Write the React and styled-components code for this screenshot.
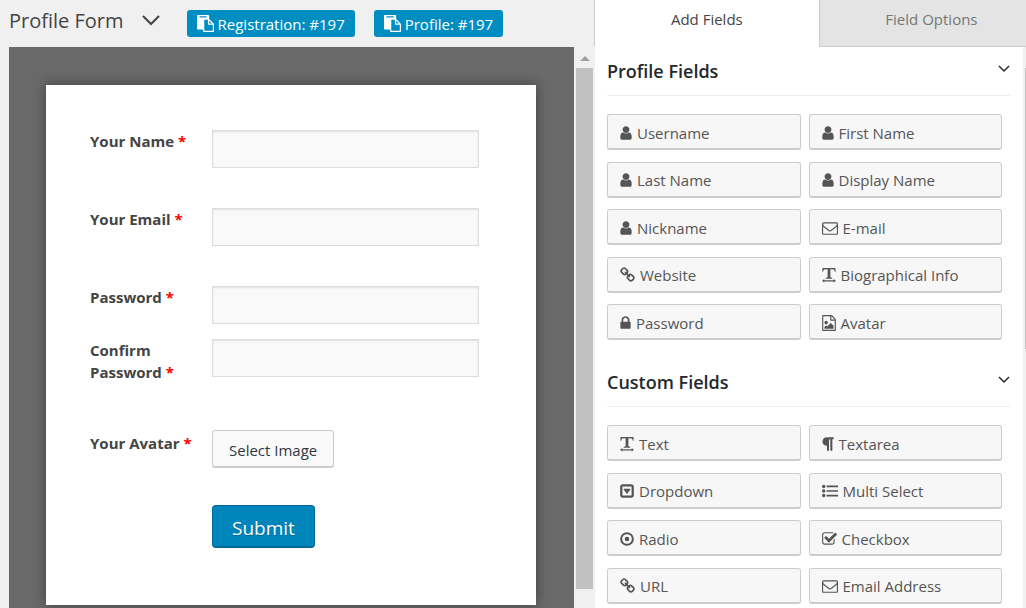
import { useState } from 'react';
import styled, { createGlobalStyle } from 'styled-components';

// Icon outlines share an 1792 unit em; "x" and "w" crop each one to its own advance width
const icons = {
  user: {
    x: 256, w: 1280, px: 12,
    d: 'M1536 1399q0 109-62.5 187t-150.5 78h-854q-88 0-150.5-78t-62.5-187q0-85 8.5-160.5t31.5-152 58.5-131 94-89 134.5-34.5q131 128 313 128t313-128q76 0 134.5 34.5t94 89 58.5 131 31.5 152 8.5 160.5zm-256-887q0 159-112.5 271.5t-271.5 112.5-271.5-112.5-112.5-271.5 112.5-271.5 271.5-112.5 271.5 112.5 112.5 271.5z',
  },
  envelope: {
    x: 0, w: 1792, px: 16,
    d: 'M1664 1504v-768q-32 36-69 66-268 206-426 338-51 43-83 67t-86.5 48.5-102.5 24.5h-2q-48 0-102.5-24.5t-86.5-48.5-83-67q-158-132-426-338-37-30-69-66v768q0 13 9.5 22.5t22.5 9.5h1472q13 0 22.5-9.5t9.5-22.5zm0-1051v-24.5l-.5-13-3-12.5-5.5-9-9-7.5-14-2.5h-1472q-13 0-22.5 9.5t-9.5 22.5q0 168 147 284 193 152 401 317 6 5 35 29.5t46 37.5 44.5 31.5 50.5 27.5 43 9h2q20 0 43-9t50.5-27.5 44.5-31.5 46-37.5 35-29.5q208-165 401-317 54-43 100.5-115.5t46.5-131.5zm128-37v1088q0 66-47 113t-113 47h-1472q-66 0-113-47t-47-113v-1088q0-66 47-113t113-47h1472q66 0 113 47t47 113z',
  },
  link: {
    x: 64, w: 1664, px: 15,
    d: 'M1520 1216q0-40-28-68l-208-208q-28-28-68-28-42 0-72 32 3 3 19 18.5t21.5 21.5 15 19 13 25.5 3.5 27.5q0 40-28 68t-68 28q-15 0-27.5-3.5t-25.5-13-19-15-21.5-21.5-18.5-19q-33 31-33 73 0 40 28 68l206 207q27 27 68 27 40 0 68-26l147-146q28-28 28-67zm-703-705q0-40-28-68l-206-207q-28-28-68-28-39 0-68 27l-147 146q-28 28-28 67 0 40 28 68l208 208q27 27 68 27 42 0 72-31-3-3-19-18.5t-21.5-21.5-15-19-13-25.5-3.5-27.5q0-40 28-68t68-28q15 0 27.5 3.5t25.5 13 19 15 21.5 21.5 18.5 19q33-31 33-73zm895 705q0 120-85 203l-147 146q-83 83-203 83-121 0-204-85l-206-207q-83-83-83-203 0-123 88-209l-88-88q-86 88-208 88-120 0-204-84l-208-208q-84-84-84-204t85-203l147-146q83-83 203-83 121 0 204 85l206 207q83 83 83 203 0 123-88 209l88 88q86-88 208-88 120 0 204 84l208 208q84 84 84 204z',
  },
  lock: {
    x: 320, w: 1152, px: 11,
    d: 'M640 768h512v-192q0-106-75-181t-181-75-181 75-75 181v192zm832 96v576q0 40-28 68t-68 28h-960q-40 0-68-28t-28-68v-576q0-40 28-68t68-28h32v-192q0-184 132-316t316-132 316 132 132 316v192h32q40 0 68 28t28 68z',
  },
  textWidth: {
    x: 128, w: 1536, px: 14,
    d: 'M170 110h1452l20 410h-100q-30-180-90-235-40-30-400-28v820q0 90 50 105l160 30v90h-732v-90l160-30q50-15 50-105v-820q-360-2-400 28-60 55-90 235h-100zM128 1550l240-210v140h1056v-140l240 210-240 210v-140h-1056v140z',
  },
  image: {
    x: 128, w: 1536, px: 14,
    d: 'M1596 380q28 28 48 76t20 88v1152q0 40-28 68t-68 28h-1344q-40 0-68-28t-28-68v-1600q0-40 28-68t68-28h896q40 0 88 20t76 48zm-444-244v376h376q-10-29-22-41l-313-313q-12-12-41-22zm384 1528v-1024h-416q-40 0-68-28t-28-68v-416h-768v1536h1280zm-128-448v320h-1024v-192l192-192 128 128 384-384zm-832-192q-80 0-136-56t-56-136 56-136 136-56 136 56 56 136-56 136-136 56z',
  },
  paragraph: {
    x: 256, w: 1280, px: 12,
    d: 'M1534 189v73q0 29-18.5 61t-42.5 32q-50 0-54 1-26 6-32 31-3 11-3 64v1152q0 25-18 43t-43 18h-108q-25 0-43-18t-18-43v-1218h-143v1218q0 25-17.5 43t-43.5 18h-108q-26 0-43.5-18t-17.5-43v-496q-147-12-245-59-126-58-192-179-64-117-64-259 0-166 88-286 88-118 209-159 111-37 417-37h479q25 0 43 18t18 43z',
  },
  dropdown: {
    x: 128, w: 1536, px: 14,
    d: 'M1273 675q18 35-5 66l-320 448q-18 27-52 27t-52-27l-320-448q-23-31-5-66 17-35 57-35h640q40 0 57 35zm135 701v-960q0-14-9-23t-23-9h-960q-14 0-23 9t-9 23v960q0 14 9 23t23 9h960q14 0 23-9t9-23zm256-960v960q0 119-84.5 203.5t-203.5 84.5h-960q-119 0-203.5-84.5t-84.5-203.5v-960q0-119 84.5-203.5t203.5-84.5h960q119 0 203.5 84.5t84.5 203.5z',
  },
  list: {
    x: 0, w: 1792, px: 16,
    d: 'M0 384a192 192 0 1 0 384 0a192 192 0 1 0-384 0zM0 896a192 192 0 1 0 384 0a192 192 0 1 0-384 0zM0 1408a192 192 0 1 0 384 0a192 192 0 1 0-384 0zM512 288h1280v192h-1280zM512 800h1280v192h-1280zM512 1312h1280v192h-1280z',
  },
  radio: {
    x: 128, w: 1536, px: 14,
    d: 'M640 896a256 256 0 1 0 512 0a256 256 0 1 0-512 0zM896 352a544 544 0 1 0 0 1088a544 544 0 1 0 0-1088zM896 128a768 768 0 1 1 0 1536a768 768 0 1 1 0-1536z',
  },
  checkbox: {
    x: 64, w: 1664, px: 15,
    d: 'M1472 930v318q0 119-84.5 203.5t-203.5 84.5h-832q-119 0-203.5-84.5t-84.5-203.5v-832q0-119 84.5-203.5t203.5-84.5h832q63 0 117 25 15 7 18 23 3 17-9 29l-49 49q-10 10-23 10-3 0-9-2-23-6-45-6h-832q-66 0-113 47t-47 113v832q0 66 47 113t113 47h832q66 0 113-47t47-113v-254q0-13 9-22l64-64q10-10 23-10 6 0 12 3 20 8 20 29zm231-489l-814 814q-24 24-57 24t-57-24l-430-430q-24-24-24-57t24-57l110-110q24-24 57-24t57 24l263 263 647-647q24-24 57-24t57 24l110 110q24 24 24 57t-24 57z',
  },
  paste: {
    x: 0, w: 1792, px: 17,
    // the sheet behind is solid, only its clip and the front page are cut out
    d: 'M1024 224v-64q0-13-9.5-22.5t-22.5-9.5h-704q-13 0-22.5 9.5t-9.5 22.5v64q0 13 9.5 22.5t22.5 9.5h704q13 0 22.5-9.5t9.5-22.5zM768 1664h896v-640h-416q-40 0-68-28t-28-68v-416h-384v1152zM1280 896h299l-299-299v299zM1792 1024v672q0 40-28 68t-68 28h-960q-40 0-68-28t-28-68v-160h-544q-40 0-68-28t-28-68v-1344q0-40 28-68t68-28h1088q40 0 68 28t28 68v328q21 13 36 28l408 408q28 28 48 76t20 88z',
  },
};

const profileFields = [
  ['user', 'Username'],
  ['user', 'First Name'],
  ['user', 'Last Name'],
  ['user', 'Display Name'],
  ['user', 'Nickname'],
  ['envelope', 'E-mail'],
  ['link', 'Website'],
  ['textWidth', 'Biographical Info'],
  ['lock', 'Password'],
  ['image', 'Avatar'],
];

const customFields = [
  ['textWidth', 'Text'],
  ['paragraph', 'Textarea'],
  ['dropdown', 'Dropdown'],
  ['list', 'Multi Select'],
  ['radio', 'Radio'],
  ['checkbox', 'Checkbox'],
  ['link', 'URL'],
  ['envelope', 'Email Address'],
];

function Icon({ name }) {
  const { x, w, px, d } = icons[name];
  const size = name === 'paste' ? 17 : 16;
  return (
    <svg width={px} height={size} viewBox={`${x} 0 ${w} 1792`} fill="currentColor" fillRule="evenodd" aria-hidden="true">
      <path d={d} />
    </svg>
  );
}

function Chevron({ width, height, stroke }) {
  return (
    <svg width={width} height={height} viewBox={`0 0 ${width} ${height}`} fill="none" stroke="currentColor" strokeWidth={stroke} aria-hidden="true">
      <path d={`M1 1L${width / 2} ${height - 2}L${width - 1} 1`} />
    </svg>
  );
}

function FieldSection({ title, fields, minHeight }) {
  const [open, setOpen] = useState(true);

  return (
    <Section>
      <SectionTitle>
        <SectionToggle type="button" aria-expanded={open} onClick={() => setOpen(!open)}>
          {title}
          <Chevron width={12} height={8} stroke={1.5} />
        </SectionToggle>
      </SectionTitle>
      {open && (
        <FieldGrid $minHeight={minHeight}>
          {fields.map(([icon, label]) => (
            <FieldButton key={label} type="button">
              <Icon name={icon} />
              {label}
            </FieldButton>
          ))}
        </FieldGrid>
      )}
    </Section>
  );
}

function FormField({ id, label, type, gap }) {
  return (
    <FormRow $gap={gap}>
      <Label htmlFor={id}>
        {label} <Required>*</Required>
      </Label>
      <Input id={id} type={type} />
    </FormRow>
  );
}

export default function App() {
  const [tab, setTab] = useState('add');

  return (
    <>
      <GlobalStyle />
      <Builder>
        <Main>
          <TopBar>
            <FormTitle>Profile Form</FormTitle>
            <TitleToggle type="button" aria-label="Switch form">
              <Chevron width={18} height={11} stroke={2} />
            </TitleToggle>
            <ShortcodeButton type="button">
              <Icon name="paste" />
              Registration: #197
            </ShortcodeButton>
            <ShortcodeButton type="button">
              <Icon name="paste" />
              Profile: #197
            </ShortcodeButton>
          </TopBar>
          <Workspace>
            <Canvas>
              <Paper onSubmit={(e) => e.preventDefault()}>
                <FormField id="name" label="Your Name" type="text" gap={40} />
                <FormField id="email" label="Your Email" type="email" gap={40} />
                <FormField id="password" label="Password" type="password" gap={15} />
                <FormField id="confirm" label="Confirm Password" type="password" gap={47} />
                <FormRow $gap={37}>
                  <Label htmlFor="avatar" $button>
                    Your Avatar <Required>*</Required>
                  </Label>
                  <SelectButton id="avatar" type="button">Select Image</SelectButton>
                </FormRow>
                <Actions>
                  <SubmitButton type="submit">Submit</SubmitButton>
                </Actions>
              </Paper>
            </Canvas>
            <ScrollTrack>
              <ScrollArrow viewBox="0 0 10 5" aria-hidden="true">
                <path d="M5 0L10 5H0z" />
              </ScrollArrow>
              <ScrollThumb />
            </ScrollTrack>
          </Workspace>
        </Main>
        <Side>
          <Tabs role="tablist">
            <Tab type="button" role="tab" aria-selected={tab === 'add'} $active={tab === 'add'} onClick={() => setTab('add')}>
              Add Fields
            </Tab>
            <Tab type="button" role="tab" aria-selected={tab === 'options'} $active={tab === 'options'} onClick={() => setTab('options')}>
              Field Options
            </Tab>
          </Tabs>
          <SideBody>
            <Panel>
              <FieldSection title="Profile Fields" fields={profileFields} minHeight={226} />
              <FieldSection title="Custom Fields" fields={customFields} minHeight={179} />
            </Panel>
            <SideTrack>
              <SideThumb />
            </SideTrack>
          </SideBody>
        </Side>
      </Builder>
    </>
  );
}

// Styled Components
const GlobalStyle = createGlobalStyle`
  * {
    box-sizing: border-box;
  }

  body {
    margin: 0;
    background: #f0f0f0;
    color: #444;
    font-family: 'Open Sans', 'Noto Sans', sans-serif;
    font-size: 15px;
  }

  button,
  input {
    font: inherit;
  }

  button {
    cursor: pointer;
  }
`;

const Builder = styled.div`
  display: grid;
  grid-template-columns: 11fr 8fr;
  height: 100vh;
  overflow: hidden;
`;

const Main = styled.main`
  display: flex;
  flex-direction: column;
  min-width: 0;
  min-height: 0;
`;

const TopBar = styled.header`
  display: flex;
  flex: none;
  align-items: center;
  height: 47px;
  padding-left: 9px;
`;

const FormTitle = styled.h1`
  margin: 0;
  padding-bottom: 6px;
  font-size: 20px;
  line-height: 28px;
  font-weight: 500;
  white-space: nowrap;
`;

const TitleToggle = styled.button`
  display: flex;
  margin: 0 27px 6px 18px;
  padding: 0;
  border: 0;
  background: none;
  color: #444;
`;

const ShortcodeButton = styled.button`
  display: flex;
  align-items: center;
  gap: 4px;
  height: 27px;
  margin-right: 19px;
  padding: 0 10px;
  border: 0;
  border-radius: 3px;
  background: #008ec2;
  color: #fff;
  white-space: nowrap;
`;

const Workspace = styled.div`
  display: flex;
  flex: 1;
  min-height: 0;
  padding-left: 9px;
`;

const Canvas = styled.div`
  flex: 1;
  min-width: 0;
  padding: 38px 38px 0 37px;
  background: #696969;
  overflow: hidden;
`;

const Paper = styled.form`
  padding: 45px 57px 57px 44px;
  background: #fff;
  box-shadow: 0 0 12px rgba(0, 0, 0, 0.4);
`;

const FormRow = styled.div`
  display: grid;
  grid-template-columns: 122px 1fr;
  align-items: start;
  margin-bottom: ${({ $gap }) => $gap}px;
`;

const Label = styled.label`
  padding-top: ${({ $button }) => ($button ? 2 : 0)}px;
  padding-right: 16px;
  font-size: 15px;
  line-height: 22px;
  font-weight: 700;
`;

const Required = styled.span`
  color: #f00;
`;

const Input = styled.input`
  width: 100%;
  height: 38px;
  padding: 0 8px;
  border: 1px solid #ddd;
  background: #f9f9f9;
  box-shadow: inset 0 1px 2px rgba(0, 0, 0, 0.1);
`;

const SelectButton = styled.button`
  justify-self: start;
  height: 38px;
  padding: 2px 16px 0;
  border: 1px solid #ccc;
  border-bottom-width: 2px;
  border-radius: 3px;
  background: #f9f9f9;
  color: #32373c;
`;

const Actions = styled.div`
  padding-left: 122px;
`;

const SubmitButton = styled.button`
  display: block;
  height: 43px;
  padding: 3px 19px 0;
  border: 1px solid #006799;
  border-bottom-width: 2px;
  border-radius: 4px;
  background: #0085ba;
  color: #fff;
  font-size: 19px;
  text-shadow: 0 1px 1px #006799;
`;

const ScrollTrack = styled.div`
  display: flex;
  flex: none;
  flex-direction: column;
  width: 20px;
  padding: 9px 1px 19px 2px;
`;

const ScrollArrow = styled.svg`
  align-self: center;
  flex: none;
  width: 10px;
  height: 5px;
  margin-bottom: 7px;
  fill: #a0a0a0;
`;

const ScrollThumb = styled.div`
  flex: 1;
  background: #c1c1c1;
`;

const Side = styled.aside`
  display: flex;
  flex-direction: column;
  min-width: 0;
  min-height: 0;
`;

// the second tab runs a little past the right edge
const Tabs = styled.div`
  display: grid;
  flex: none;
  grid-template-columns: 52% 52%;
  height: 47px;
  overflow: hidden;
`;

const Tab = styled.button`
  padding: 0 0 8px;
  border: 0;
  border-left: 1px solid #ccc;
  border-bottom: 1px solid ${({ $active }) => ($active ? '#fff' : '#ccc')};
  background: ${({ $active }) => ($active ? '#fff' : '#e4e4e4')};
  color: ${({ $active }) => ($active ? '#444' : '#777')};
`;

const SideBody = styled.div`
  display: flex;
  flex: 1;
  min-height: 0;
  padding-left: 1px;
`;

const Panel = styled.div`
  flex: 1;
  min-width: 0;
  padding: 0 13px 0 12px;
  background: #fff;
  overflow: hidden;
`;

const SideTrack = styled.div`
  flex: none;
  width: 3px;
  padding: 21px 0 0 2px;
`;

const SideThumb = styled.div`
  height: 52%;
  background: #c1c1c1;
`;

const Section = styled.section`
  margin-bottom: 18px;
`;

const SectionTitle = styled.h2`
  margin: 0 0 18px;
  border-bottom: 1px solid #eee;
  font-size: 18px;
  font-weight: 600;
`;

const SectionToggle = styled.button`
  display: flex;
  align-items: center;
  justify-content: space-between;
  width: 100%;
  height: 48px;
  padding: 0;
  border: 0;
  background: none;
  color: #23282d;

  svg {
    margin-bottom: 4px;
  }
`;

const FieldGrid = styled.div`
  display: grid;
  grid-template-columns: 1fr 1fr;
  column-gap: 8px;
  align-content: space-between;
  min-height: ${({ $minHeight }) => $minHeight}px;
  margin-right: 8px;
`;

const FieldButton = styled.button`
  display: flex;
  align-items: center;
  gap: 5px;
  height: 36px;
  padding: 2px 12px 0;
  border: 1px solid #ccc;
  border-bottom-width: 2px;
  border-radius: 3px;
  background: #f7f7f7;
  color: #555;
  white-space: nowrap;
`;
